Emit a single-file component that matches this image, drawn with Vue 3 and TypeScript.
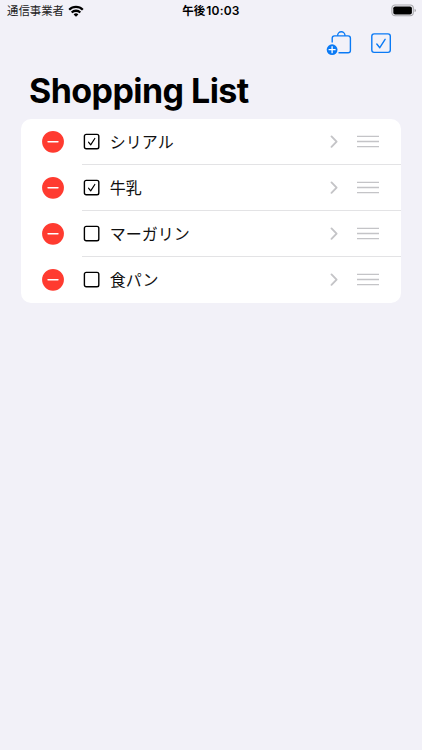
<script setup lang="ts">
import { ref } from 'vue'

interface Item {
  id: number
  name: string
  checked: boolean
}

const items = ref<Item[]>([
  { id: 1, name: 'シリアル', checked: true },
  { id: 2, name: '牛乳', checked: true },
  { id: 3, name: 'マーガリン', checked: false },
  { id: 4, name: '食パン', checked: false },
])

function remove(id: number) {
  items.value = items.value.filter((item) => item.id !== id)
}
</script>

<template>
  <div class="screen">
    <header class="status">
      <div class="carrier">
        <span class="carrier-name">通信事業者</span>
        <svg class="wifi" width="16" height="12" viewBox="0 0 16 12">
          <g fill="none" stroke="#000" stroke-width="2.3">
            <path d="M1.2 4.7a9.7 9.7 0 0 1 13.6 0" />
            <path d="M3.7 7.5a6.1 6.1 0 0 1 8.6 0" />
          </g>
          <path d="M8 11.8 5.6 9.5a3.4 3.4 0 0 1 4.8 0z" />
        </svg>
      </div>
      <div class="time"><span class="period">午後</span><span class="clock">10:03</span></div>
      <svg class="battery" width="26" height="13" viewBox="0 0 26 13">
        <rect x=".9" y="1" width="21.4" height="10.8" rx="3.2" fill="none" stroke="#a9a9ad" stroke-width="1.1" />
        <rect x="2.3" y="2.4" width="18.6" height="8" rx="1.9" />
        <path d="M23.6 4.7c1.7.5 1.7 2.9 0 3.4z" fill="#98989c" />
      </svg>
    </header>

    <nav class="toolbar">
      <button class="tool" aria-label="追加">
        <svg width="26" height="26" viewBox="0 0 26 26">
          <g fill="none" stroke="#0a7af5" stroke-width="1.4">
            <path d="M6.2 12.4V8.2q0-2.3 2.3-2.3h13.6q2.3 0 2.3 2.3v12.3q0 2.3-2.3 2.3h-9.6" />
            <path d="M11.6 5.7a3.7 3.9 0 0 1 7.4 0" />
          </g>
          <circle cx="6.1" cy="19.7" r="5.4" fill="#0a7af5" />
          <path d="M6.1 16.7v6M3.1 19.7h6" stroke="#fff" stroke-width="1.3" stroke-linecap="round" />
        </svg>
      </button>
      <button class="tool" aria-label="選択">
        <svg width="22" height="26" viewBox="0 0 22 26">
          <rect x="1.8" y="3.9" width="18.5" height="18.5" rx="2.3" fill="none" stroke="#0a7af5" stroke-width="1.4" />
          <path d="m6.8 14 3 3.7 5.3-8.4" fill="none" stroke="#0a7af5" stroke-width="1.4" stroke-linecap="round" stroke-linejoin="round" />
        </svg>
      </button>
    </nav>

    <h1 class="title">Shopping List</h1>

    <ul class="list">
      <li v-for="item in items" :key="item.id" class="row">
        <button class="remove" aria-label="削除" @click="remove(item.id)">
          <svg width="22" height="22" viewBox="0 0 22 22">
            <circle cx="11" cy="10.8" r="10.9" fill="#ff3b30" />
            <path d="M6.1 10.8h9.8" stroke="#fff" stroke-width="1.6" stroke-linecap="round" />
          </svg>
        </button>
        <div class="content">
          <svg class="box" width="18" height="18" viewBox="0 0 18 18" @click="item.checked = !item.checked">
            <rect x="1.4" y="1.4" width="14.4" height="14.4" rx="1.8" fill="none" stroke="#000" stroke-width="1.4" />
            <path v-if="item.checked" d="m5.5 9.1 2.2 2.8 4.1-6.4" fill="none" stroke="#000" stroke-width="1.2" stroke-linecap="round" stroke-linejoin="round" />
          </svg>
          <span class="name">{{ item.name }}</span>
          <svg class="chevron" width="9" height="14" viewBox="0 0 9 14">
            <path d="m1.5 1.4 5.1 5.2-5.1 5.2" fill="none" stroke="#c4c4c7" stroke-width="1.9" stroke-linecap="round" stroke-linejoin="round" />
          </svg>
          <svg class="grip" width="22" height="14" viewBox="0 0 22 14">
            <path d="M0 1.4h22M0 6.5h22M0 11.6h22" stroke="#c4c4c7" stroke-width="1.4" />
          </svg>
        </div>
      </li>
    </ul>
  </div>
</template>

<style>
body {
  background: #f2f1f8;
}
</style>

<style scoped>
.screen {
  box-sizing: border-box;
  width: 422px;
  height: 750px;
  overflow: hidden;
  background: #f2f1f8;
  color: #000;
  font-family: Inter, 'Noto Sans CJK JP', sans-serif;
}

.status {
  display: grid;
  grid-template-columns: 1fr auto 1fr;
  align-items: center;
  height: 22px;
  padding: 0 5px 0 7px;
}

.carrier {
  display: flex;
  align-items: center;
  gap: 4px;
}

.carrier-name {
  font-size: 11.4px;
  line-height: 22px;
  color: #222;
}

.wifi {
  margin-top: -1px;
}

.time {
  display: flex;
  align-items: center;
  gap: 1px;
  padding-right: 2px;
  font-size: 11.5px;
  font-weight: 600;
  line-height: 22px;
}

.period {
  font-weight: 700;
}

.clock {
  font-size: 12px;
  letter-spacing: 0.2px;
}

.battery {
  justify-self: end;
  margin-top: -2px;
}

.toolbar {
  display: flex;
  justify-content: flex-end;
  gap: 18px;
  height: 44px;
  padding: 8px 30px 0 0;
  box-sizing: border-box;
}

.tool,
.remove {
  display: block;
  height: min-content;
  padding: 0;
  border: 0;
  background: none;
  line-height: 0;
}

.tool svg,
.remove svg {
  overflow: visible;
}

.title {
  margin: 0;
  padding: 4px 0 0 29px;
  height: 48.6px;
  font-size: 34px;
  font-weight: 700;
  line-height: 41px;
  letter-spacing: -0.56px;
}

.list {
  width: 380px;
  margin: 0 0 0 21px;
  padding: 0;
  overflow: hidden;
  border-radius: 10px;
  background: #fff;
  list-style: none;
}

.row {
  display: flex;
  align-items: center;
  height: 46.15px;
  padding-left: 21.3px;
}

.content {
  display: flex;
  flex: 1;
  align-items: center;
  height: 100%;
  margin-left: 17.5px;
  padding-right: 22px;
  box-sizing: border-box;
  box-shadow: inset 0 -1px #e3e3e5;
}

.row:last-child .content {
  box-shadow: none;
}

.box {
  margin-left: 1px;
}

.name {
  flex: 1;
  margin-left: 9px;
  color: #111;
  font-size: 16px;
  line-height: 24px;
}

.chevron {
  margin-right: 18px;
}
</style>
